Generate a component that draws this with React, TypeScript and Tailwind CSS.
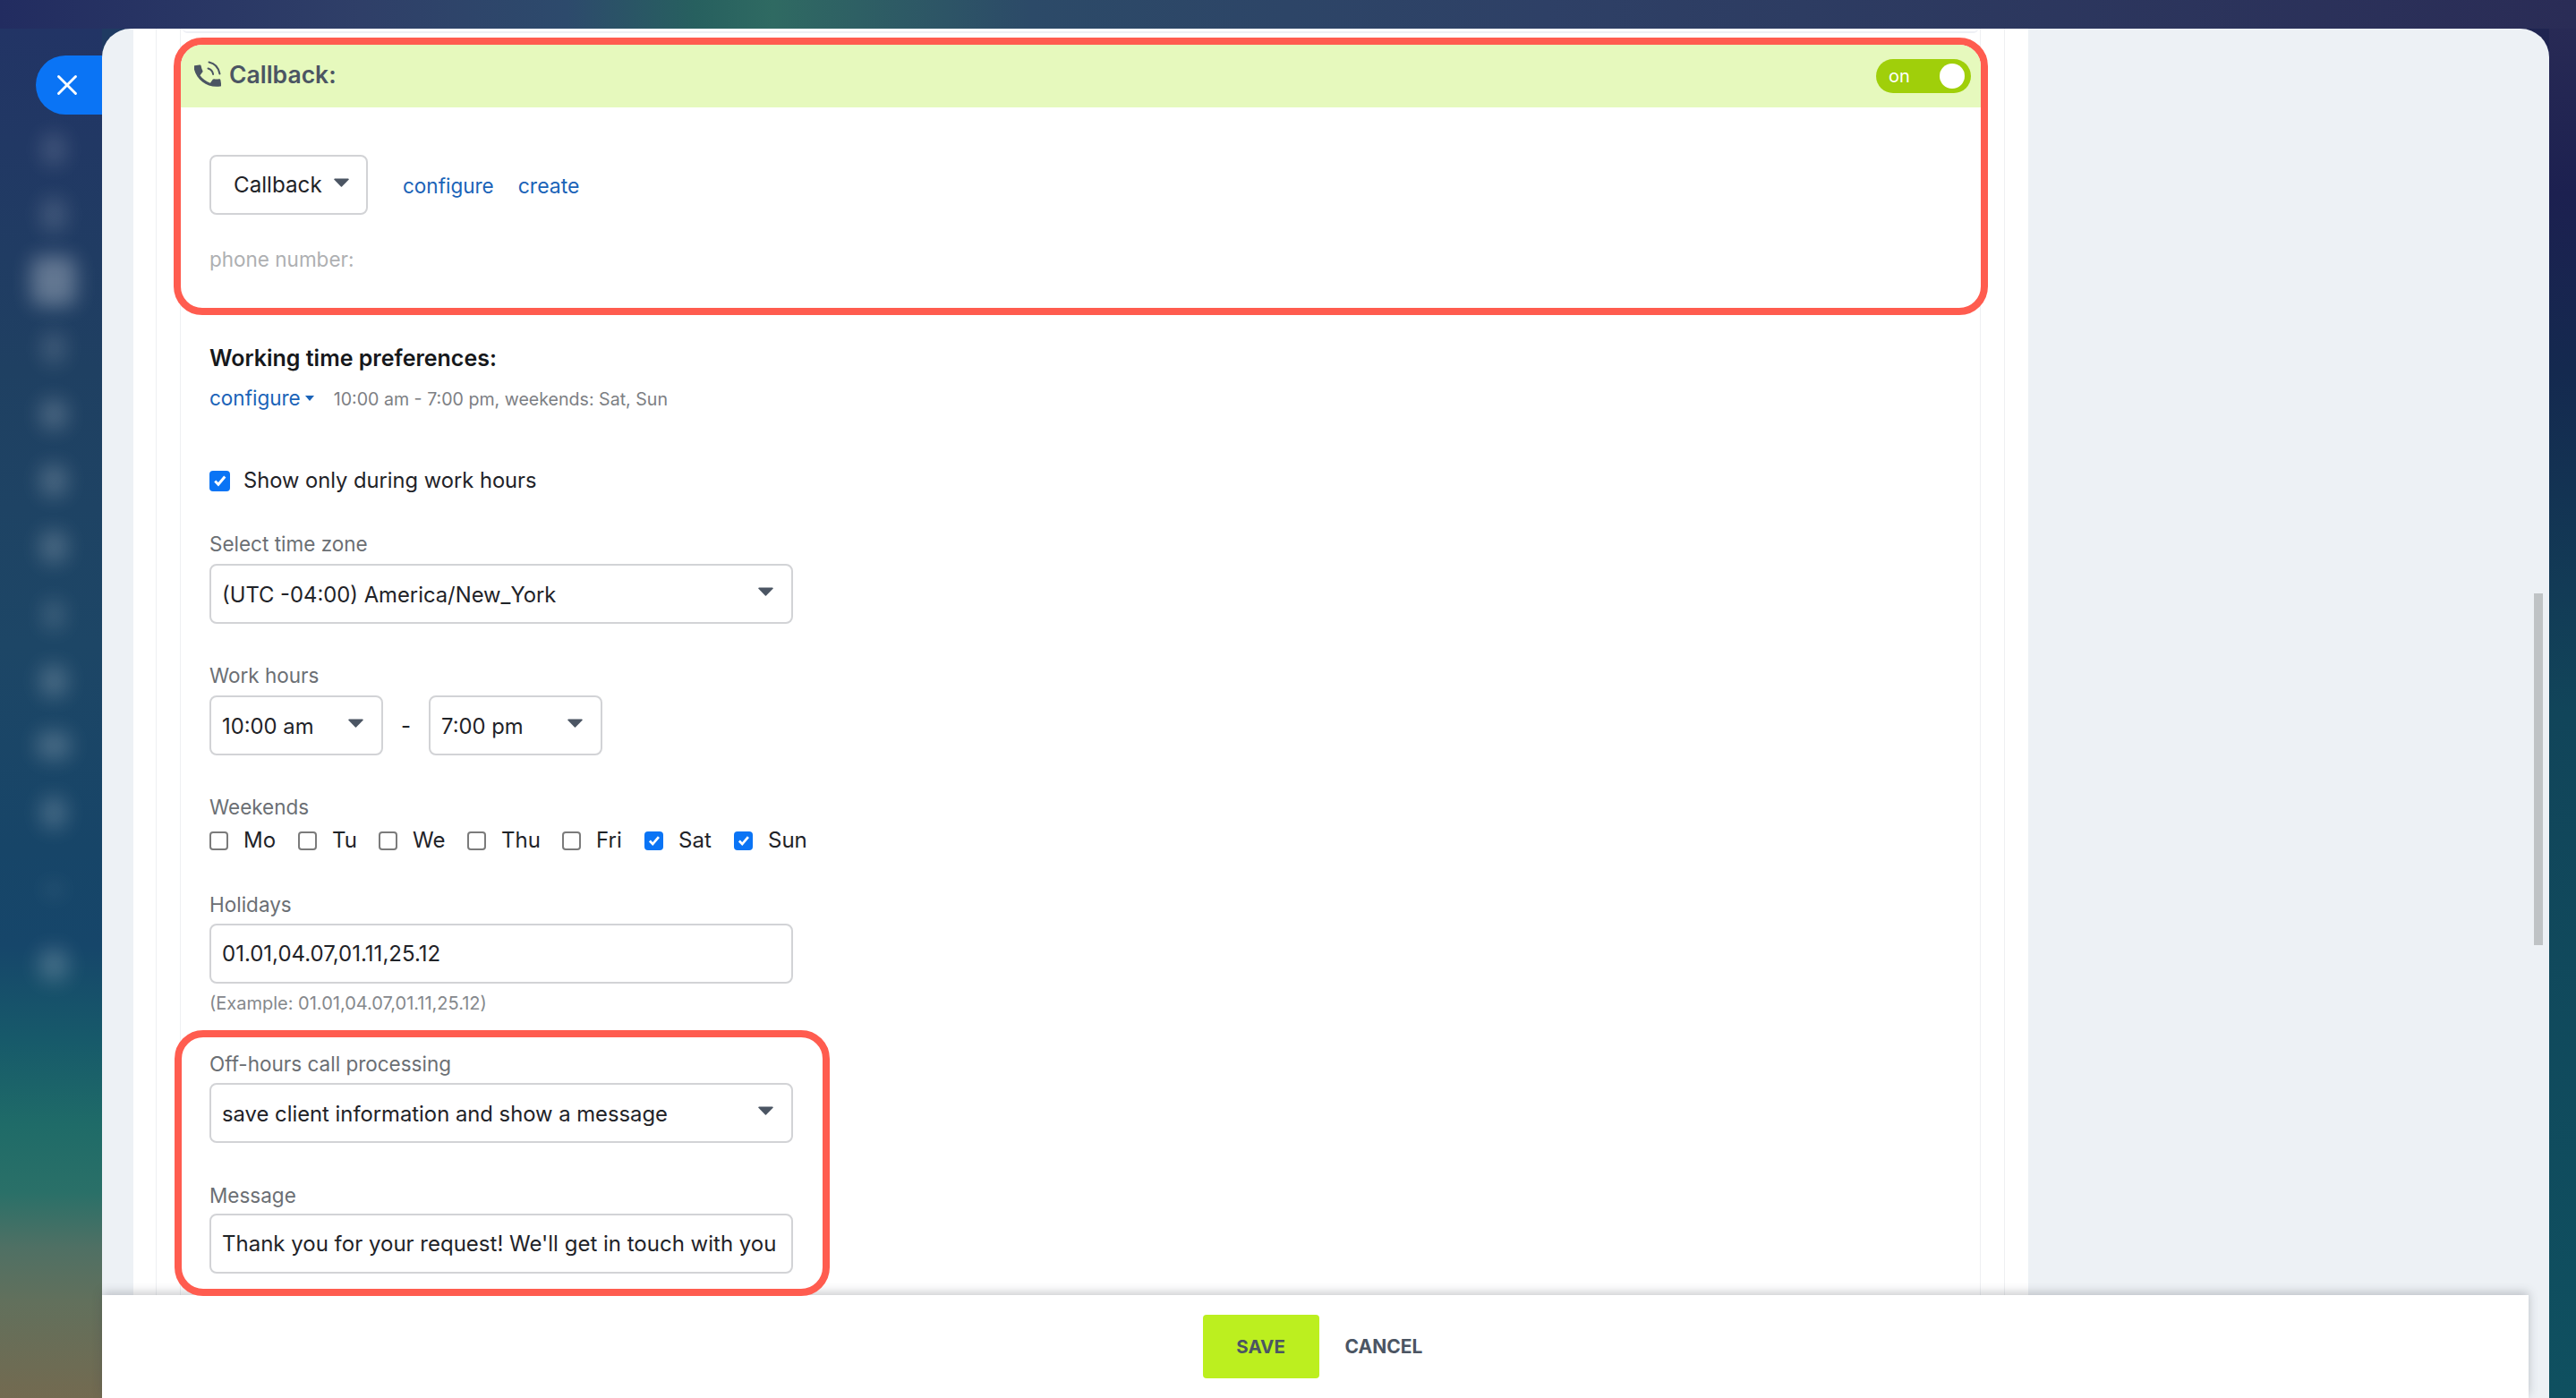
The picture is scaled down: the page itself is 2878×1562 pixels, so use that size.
import React from "react";
import { X } from "lucide-react";

const blobs = [
  { w: "w-[26px]", h: "h-[36px]", tint: "bg-white/15", gap: "h-[74px]" },
  { w: "w-[28px]", h: "h-[38px]", tint: "bg-white/15", gap: "h-[72px]" },
  { w: "w-[50px]", h: "h-[56px]", tint: "bg-white/30", gap: "h-[75px]" },
  { w: "w-[26px]", h: "h-[36px]", tint: "bg-white/15", gap: "h-[75px]" },
  { w: "w-[30px]", h: "h-[34px]", tint: "bg-white/20", gap: "h-[74px]" },
  { w: "w-[30px]", h: "h-[36px]", tint: "bg-white/20", gap: "h-[73px]" },
  { w: "w-[30px]", h: "h-[36px]", tint: "bg-white/20", gap: "h-[76px]" },
  { w: "w-[24px]", h: "h-[34px]", tint: "bg-white/15", gap: "h-[75px]" },
  { w: "w-[30px]", h: "h-[36px]", tint: "bg-white/20", gap: "h-[73px]" },
  { w: "w-[38px]", h: "h-[32px]", tint: "bg-white/20", gap: "h-[72px]" },
  { w: "w-[28px]", h: "h-[36px]", tint: "bg-white/20", gap: "h-[77px]" },
  { w: "w-[22px]", h: "h-[14px]", tint: "bg-white/10", gap: "h-[95px]" },
  { w: "w-[32px]", h: "h-[36px]", tint: "bg-white/20", gap: "h-[74px]" },
];

const days = [
  { label: "Mo", checked: false, width: "w-[99px]" },
  { label: "Tu", checked: false, width: "w-[90px]" },
  { label: "We", checked: false, width: "w-[99px]" },
  { label: "Thu", checked: false, width: "w-[106px]" },
  { label: "Fri", checked: false, width: "w-[92px]" },
  { label: "Sat", checked: true, width: "w-[100px]" },
  { label: "Sun", checked: true, width: "w-auto" },
];

function Caret({ className = "" }: { className?: string }) {
  return (
    <svg viewBox="0 0 17 10" className={`h-[10px] w-[17px] shrink-0 fill-[#4b5563] ${className}`}>
      <path d="M1 0.5h15a.8.8 0 0 1 .6 1.3L9 9.5a.8.8 0 0 1-1.1 0L.4 1.8A.8.8 0 0 1 1 .5z" />
    </svg>
  );
}

function PhoneIcon() {
  return (
    <svg viewBox="0 0 30 31" className="h-[31px] w-[30px] shrink-0 text-[#4b5563]">
      <g transform="rotate(-9 14 17) translate(-3.4 -1.2) scale(1.52)" fill="currentColor">
        <path d="M6.62 10.79c1.44 2.83 3.76 5.14 6.59 6.59l2.2-2.2c.27-.27.67-.36 1.02-.24 1.12.37 2.33.57 3.57.57.55 0 1 .45 1 1V20c0 .55-.45 1-1 1-9.39 0-17-7.61-17-17 0-.55.45-1 1-1h3.5c.55 0 1 .45 1 1 0 1.25.2 2.45.57 3.57.11.35.03.74-.25 1.02l-2.2 2.2z" />
      </g>
      <path d="M15.5 8.5c3 .8 5 3 5.6 6.4M16.5 1.5c6 1.2 10.6 5.6 12 13" fill="none" stroke="currentColor" strokeWidth="2" strokeLinecap="round" />
    </svg>
  );
}

function Box({ checked, size = "h-[21px] w-[21px]" }: { checked: boolean; size?: string }) {
  if (!checked) {
    return <span className={`${size} shrink-0 rounded-[4px] border-2 border-[#7b7b7b] bg-white`} />;
  }
  return (
    <span className={`${size} flex shrink-0 items-center justify-center rounded-[4px] bg-[#0a74f5]`}>
      <svg viewBox="0 0 16 16" className="h-[85%] w-[85%] fill-none stroke-white stroke-[2.4]">
        <path d="M3.5 8.5l3 3.2 6-7.2" />
      </svg>
    </span>
  );
}

function SelectBox({ text, className = "" }: { text: string; className?: string }) {
  return (
    <div className={`flex h-[67px] items-center justify-between rounded-[8px] border-2 border-[#d2d3d6] bg-white pl-[12px] pr-[20px] ${className}`}>
      <span className="mt-[2px] text-[23.8px] text-[#1f2328]">{text}</span>
      <Caret className="-mt-[6px]" />
    </div>
  );
}

function InputBox({ text }: { text: string }) {
  return (
    <div className="flex h-[67px] w-[652px] items-center overflow-hidden whitespace-nowrap rounded-[8px] border-2 border-[#d2d3d6] bg-white px-[12px] text-[24px] text-[#1f2328]">
      {text}
    </div>
  );
}

function Label({ children }: { children: React.ReactNode }) {
  return <div className="h-[34px] text-[22.5px] leading-[34px] text-[#6b6f74]">{children}</div>;
}

export default function App() {
  return (
    <div className="relative flex h-[1562px] w-[2878px] flex-col overflow-hidden bg-[linear-gradient(90deg,#1f3a62_0%,#1f3a62_10%,#1f2450_100%)] font-['Inter',sans-serif]">
      {/* top strip of wallpaper */}
      <div className="h-[32px] shrink-0 bg-[linear-gradient(90deg,#222c60_0%,#2f3f68_14%,#2d4a6c_22%,#27605f_27%,#2f6a62_30%,#2c4a68_40%,#2e4066_60%,#2d3c62_70%,#2a2c56_100%)]" />

      <div className="flex min-h-0 flex-1">
        {/* blurred sidebar */}
        <div className="relative w-[114px] shrink-0 bg-[linear-gradient(180deg,#223465_0%,#1f4062_25%,#1d4666_45%,#174568_60%,#16466a_67%,#175a6a_74%,#1f6b68_80%,#2a7068_85%,#4f7064_89%,#62705c_93%,#736a50_100%)] pl-[6px] pt-[98px]">
          <div className="flex flex-col items-center">
            {blobs.map((b, i) => (
              <div key={i} className={`${b.gap} flex w-[104px] items-center justify-center`}>
                <div className={`${b.w} ${b.h} ${b.tint} rounded-[12px] blur-[11px]`} />
              </div>
            ))}
          </div>
          <button className="absolute left-[40px] top-[30px] flex h-[66px] w-[74px] items-center justify-center rounded-l-[33px] bg-[#0a74f5] text-white">
            <X size={38} strokeWidth={1.8} className="-ml-[4px]" />
          </button>
        </div>

        {/* slider panel */}
        <div className="relative flex w-[2734px] shrink-0 flex-col rounded-t-[32px] bg-[#edf1f5]">
          <div className="h-[1415px] shrink-0 pl-[35px]">
            <div className="h-full w-[2117px] bg-white pl-[25px] pr-[26px]">
              <div className="h-full border-x border-[#eef0f2] px-[26px]">
                <div className="h-full border-x border-[#eef0f2]">
                  <div className="mx-[2px] h-[5px] rounded-b-[6px] border-b-2 border-[#eef0f5]" />

                  {/* Callback section */}
                  <div className="relative z-30 -ml-[8px] -mr-[9px] mt-[5px] h-[310px] overflow-hidden rounded-[32px] border-8 border-[#ff5c4f] bg-white">
                    <div className="flex h-[70px] items-center justify-between bg-[#e6f9bd] pl-[15px] pr-[11px]">
                      <div className="-mt-[3px] flex items-center gap-[9px]">
                        <PhoneIcon />
                        <span className="text-[26.5px] font-semibold text-[#4b5563]">Callback:</span>
                      </div>
                      <div className="flex h-[38px] w-[106px] items-center justify-between rounded-full bg-[#a0cf0a] pl-[14px] pr-[7px]">
                        <span className="text-[20px] text-white">on</span>
                        <span className="h-[28px] w-[28px] rounded-full bg-white" />
                      </div>
                    </div>
                    <div className="pl-[32px] pt-[53px]">
                      <div className="flex items-center">
                        <div className="flex h-[67px] w-[177px] items-center gap-[13px] rounded-[8px] border-2 border-[#d2d3d6] pl-[25px]">
                          <span className="mt-[2px] text-[24.2px] text-[#1f2328]">Callback</span>
                          <Caret className="-mt-[6px] h-[9px] w-[16px]" />
                        </div>
                        <a className="ml-[39px] mt-[3px] text-[22.5px] text-[#1a63b8]">configure</a>
                        <a className="ml-[27px] mt-[3px] text-[23px] text-[#1a63b8]">create</a>
                      </div>
                      <div className="mt-[33px] text-[22.5px] leading-[34px] text-[#aeb0b2]">phone number:</div>
                    </div>
                  </div>

                  {/* Working time */}
                  <div className="pl-[32px]">
                    <div className="mt-[32px] text-[25px] font-semibold leading-[32px] text-[#16181b]">Working time preferences:</div>
                    <div className="mt-[13px] flex h-[32px] items-center">
                      <a className="text-[22.5px] text-[#1a63b8]">configure</a>
                      <svg viewBox="0 0 10 6" className="ml-[5px] h-[6px] w-[10px] fill-[#1a63b8]"><path d="M0 0h10L5 6z" /></svg>
                      <span className="ml-[22px] mt-[4px] text-[19.6px] text-[#7d8084]">10:00 am - 7:00 pm, weekends: Sat, Sun</span>
                    </div>

                    <div className="mt-[60px] flex h-[32px] items-center gap-[15px]">
                      <Box checked size="h-[23px] w-[23px]" />
                      <span className="text-[23.7px] text-[#1f2328]">Show only during work hours</span>
                    </div>

                    <div className="mt-[38px]"><Label>Select time zone</Label></div>
                    <SelectBox text="(UTC -04:00) America/New_York" className="mt-[5px] w-[652px]" />

                    <div className="mt-[41px]"><Label>Work hours</Label></div>
                    <div className="mt-[5px] flex items-center">
                      <SelectBox text="10:00 am" className="w-[194px]" />
                      <span className="w-[51px] text-center text-[24px] text-[#1f2328]">-</span>
                      <SelectBox text="7:00 pm" className="w-[194px]" />
                    </div>

                    <div className="mt-[41px]"><Label>Weekends</Label></div>
                    <div className="mt-[2px] flex h-[36px] items-center">
                      {days.map((d) => (
                        <div key={d.label} className={`flex items-center gap-[17px] ${d.width}`}>
                          <Box checked={d.checked} />
                          <span className="text-[24px] text-[#1f2328]">{d.label}</span>
                        </div>
                      ))}
                    </div>

                    <div className="mt-[37px]"><Label>Holidays</Label></div>
                    <div className="mt-[4px]"><InputBox text="01.01,04.07,01.11,25.12" /></div>
                    <div className="mt-[8px] h-[28px] text-[20px] leading-[28px] text-[#85888c]">(Example: 01.01,04.07,01.11,25.12)</div>
                  </div>

                  {/* Off-hours section */}
                  <div className="relative z-30 -ml-[7px] mt-[16px] h-[297px] w-[732px] rounded-[32px] border-8 border-[#ff5c4f] bg-white pl-[31px] pt-[13px]">
                    <Label>Off-hours call processing</Label>
                    <SelectBox text="save client information and show a message" className="mt-[4px] w-[652px]" />
                    <div className="mt-[42px]"><Label>Message</Label></div>
                    <div className="mt-[3px]"><InputBox text="Thank you for your request! We'll get in touch with you" /></div>
                  </div>
                </div>
              </div>
            </div>
          </div>

          {/* Footer */}
          <div className="relative z-20 mr-[23px] flex min-h-0 flex-1 items-start justify-center bg-white pr-[6px] pt-[22px] shadow-[0_-3px_10px_rgba(60,65,75,0.28)]">
            <button className="flex h-[71px] w-[130px] items-center justify-center rounded-[4px] bg-[#bcef1f] pt-[1px] text-[20.5px] font-bold text-[#4b5563]">SAVE</button>
            <span className="ml-[29px] flex h-[71px] items-center pt-[1px] text-[21px] font-bold text-[#4b5563]">CANCEL</span>
          </div>

          {/* scrollbar */}
          <div className="absolute left-[2717px] top-[631px] h-[393px] w-[10px] bg-[#bfc3c5]" />
        </div>

        <div className="w-[30px] shrink-0 bg-[linear-gradient(180deg,#282a55_0%,#1c2050_12%,#14294f_25%,#11455a_50%,#0f5060_100%)]" />
      </div>
    </div>
  );
}
